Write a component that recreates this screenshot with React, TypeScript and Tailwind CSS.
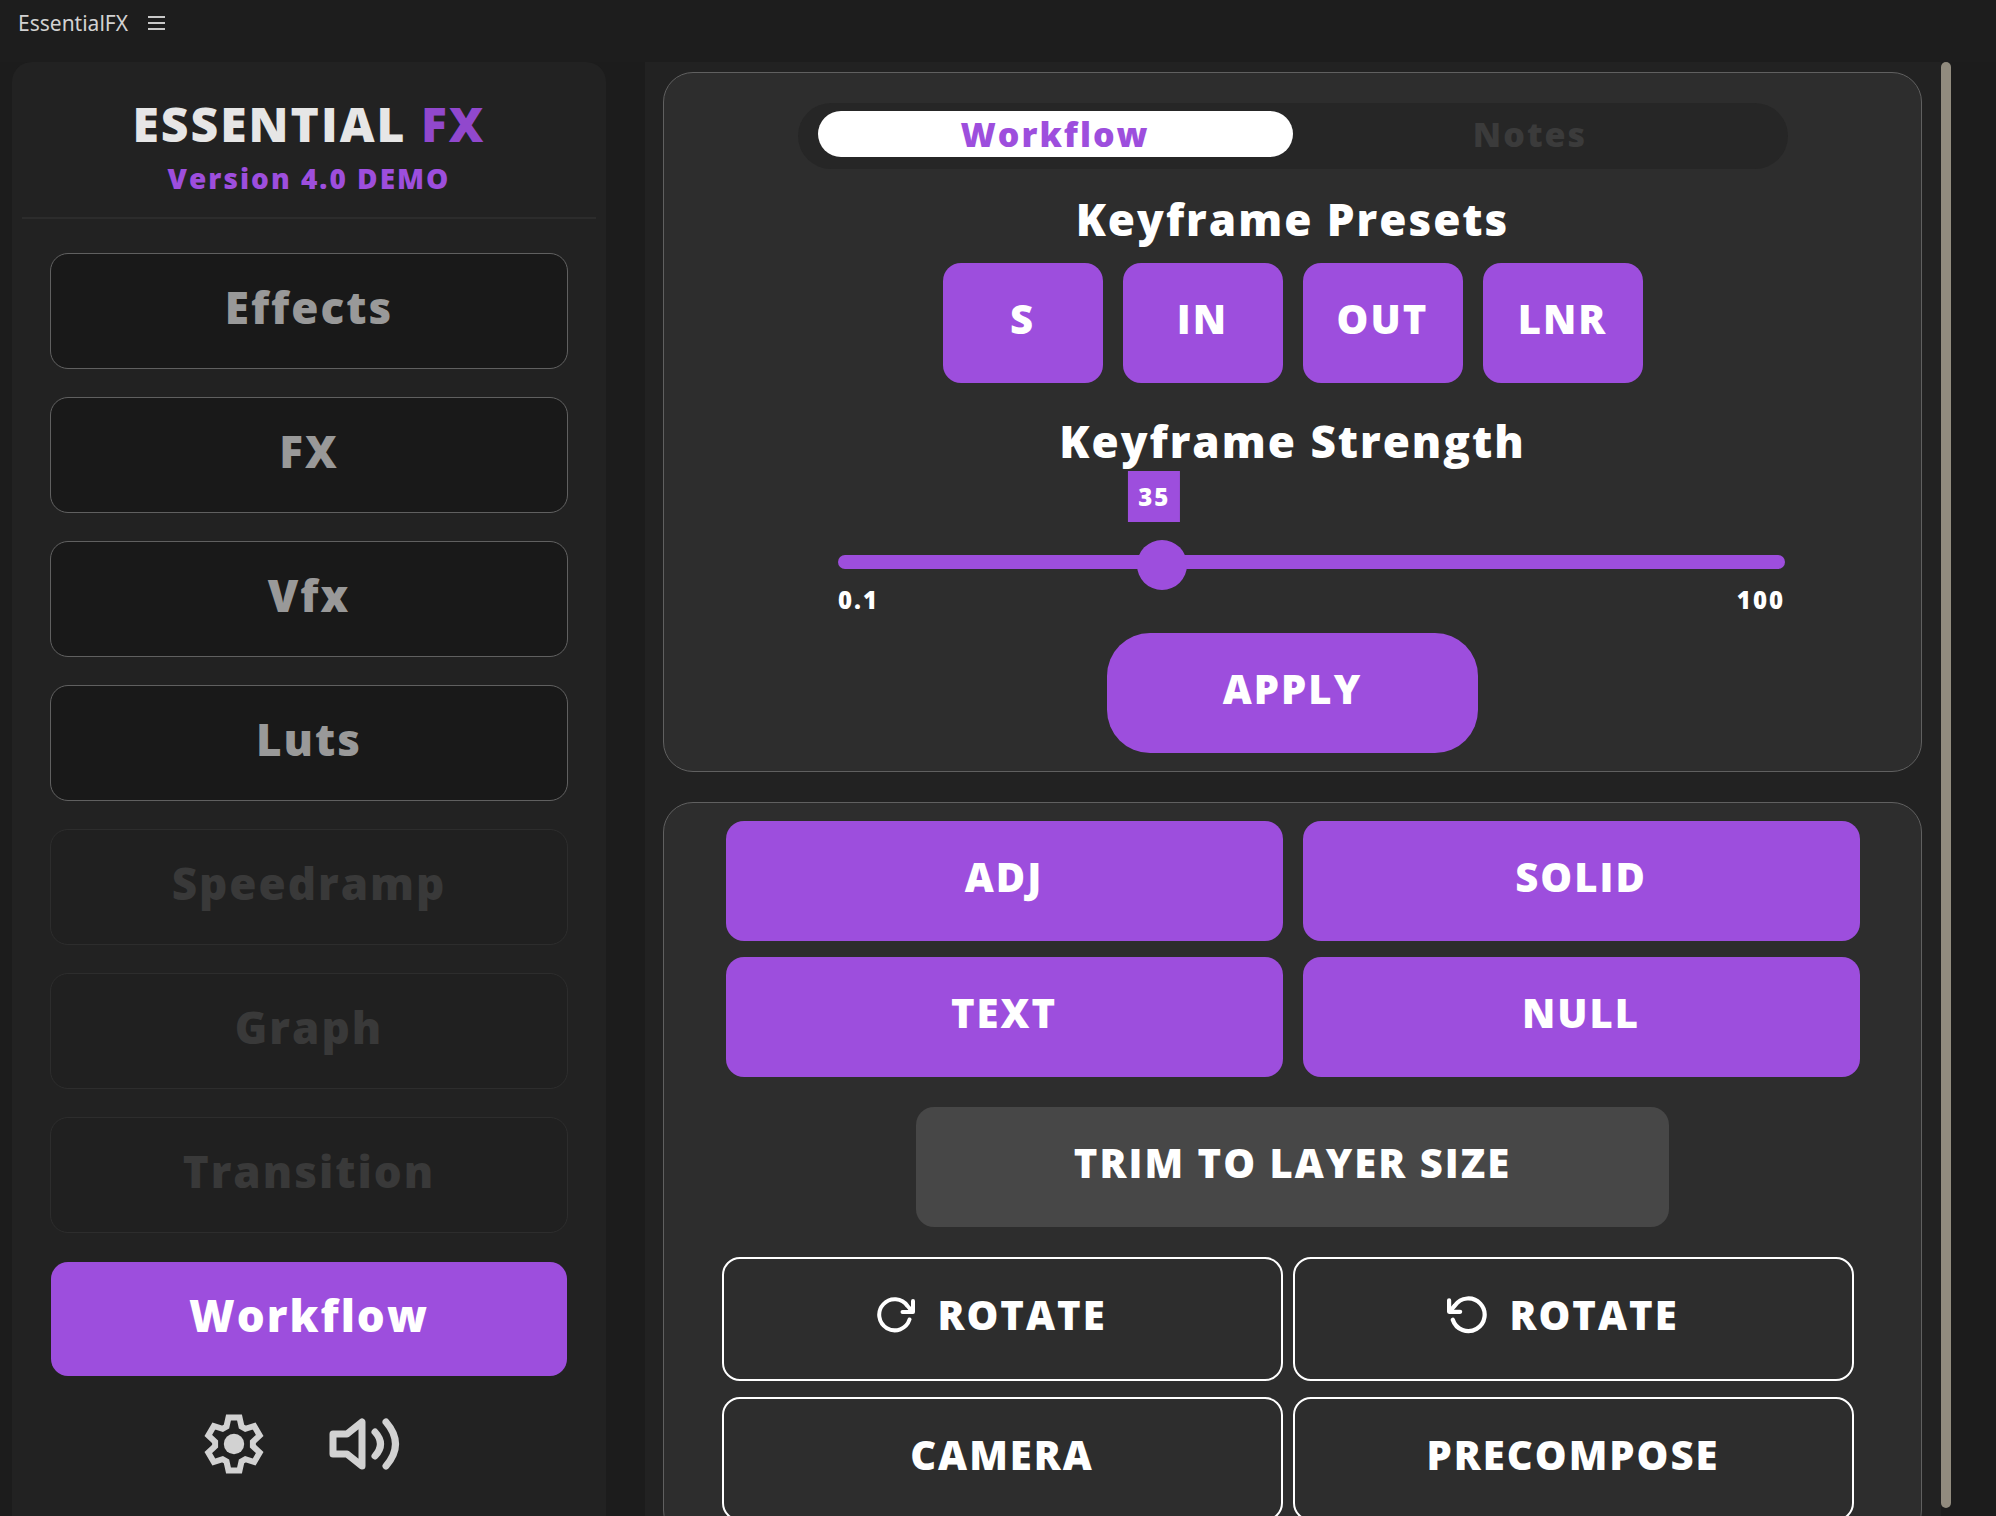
import { useState } from 'react';

interface MenuItem {
  label: string;
  locked?: boolean;
}

const menu: MenuItem[] = [
  { label: 'Effects' },
  { label: 'FX' },
  { label: 'Vfx' },
  { label: 'Luts' },
  { label: 'Speedramp', locked: true },
  { label: 'Graph', locked: true },
  { label: 'Transition', locked: true },
  { label: 'Workflow' },
];

const presets = ['S', 'IN', 'OUT', 'LNR'];
const layers = ['ADJ', 'SOLID', 'TEXT', 'NULL'];

function GearIcon() {
  return (
    <svg viewBox="-30 -30 60 60" className="h-[60px] w-[60px]" fill="none">
      <path
        d="M-5.5 -26.5 5.5 -26.5 7.5 -17.5 11.4 -15.2 20.2 -18 25.7 -8.5 18.9 -2.2 18.9 2.2 25.7 8.5 20.2 18 11.4 15.2 7.5 17.5 5.5 26.5 -5.5 26.5 -7.5 17.5 -11.4 15.2 -20.2 18 -25.7 8.5 -18.9 2.2 -18.9 -2.2 -25.7 -8.5 -20.2 -18 -11.4 -15.2 -7.5 -17.5Z"
        stroke="currentColor"
        strokeWidth="6"
      />
      <circle r="10.2" fill="currentColor" />
    </svg>
  );
}

function SoundIcon() {
  return (
    <svg
      viewBox="0 0 72 54"
      className="h-[54px] w-[72px]"
      fill="none"
      stroke="currentColor"
      strokeWidth="7"
      strokeLinecap="round"
      strokeLinejoin="round"
    >
      <path d="M5 17H19L34 5V49L19 37H5Z" />
      <path d="M47 15Q58 27 47 39" />
      <path d="M58 5Q77 27 58 49" />
    </svg>
  );
}

function RotateIcon({ flip }: { flip?: boolean }) {
  return (
    <svg
      viewBox="0 0 38 38"
      className={flip ? 'h-10 w-10 -scale-x-100' : 'h-[38px] w-[38px]'}
      fill="none"
      stroke="currentColor"
      strokeWidth="4"
      strokeLinecap="round"
      strokeLinejoin="round"
    >
      <path d="M32.5 23.5A15.5 15.5 0 1 1 30.5 10L35 15" />
      <path d="M36 5V16H25.5" />
      <path d="M36 10V16H30Z" fill="currentColor" strokeWidth="1" />
    </svg>
  );
}

export default function App() {
  const [page, setPage] = useState('Workflow');
  const [tab, setTab] = useState('Workflow');
  const [strength, setStrength] = useState(33.4);

  const solid =
    'h-[120px] rounded-[18px] bg-[#9d4edd] pb-2 text-[40px] hover:bg-[#a95fe3]';
  const outline =
    'flex h-[124px] items-center justify-center rounded-[18px] border-2 border-white pb-2 text-[40px]';

  return (
    <div className="flex h-screen flex-col overflow-hidden bg-[#1c1c1c] font-['Open_Sans',sans-serif] font-extrabold tracking-[2px] text-white">
      <header className="flex h-[62px] shrink-0 items-start gap-5 bg-[#1d1d1d] px-[18px] pt-2 font-['Noto_Sans',sans-serif] font-normal tracking-normal text-[#d2d2d2]">
        <span className="text-[21px] leading-[30px]">EssentialFX</span>
        <button aria-label="Panel menu" className="flex h-[30px] flex-col justify-center gap-[4px]">
          <span className="h-[2px] w-[17px] bg-[#c8c8c8]" />
          <span className="h-[2px] w-[17px] bg-[#c8c8c8]" />
          <span className="h-[2px] w-[17px] bg-[#c8c8c8]" />
        </button>
      </header>

      <div className="flex min-h-0 flex-1 pr-[45px] pl-3">
        <aside className="w-[594px] shrink-0 rounded-t-[20px] bg-[#222222] px-[10px]">
          <div className="border-b-2 border-[#2c2c2c] pt-8 pb-[19px] text-center">
            <h1 className="text-[48px] leading-[60px] text-[#e6e6e6]">
              ESSENTIAL <span className="text-[#9148cd]">FX</span>
            </h1>
            <p className="mt-1 text-[28px] leading-[40px] text-[#9d4edd]">Version 4.0 DEMO</p>
          </div>

          <nav className="flex flex-col gap-7 px-7 pt-[34px]">
            {menu.map(({ label, locked }) => (
              <button
                key={label}
                disabled={locked}
                onClick={() => setPage(label)}
                className={`h-[116px] rounded-[18px] border bg-clip-padding pb-2 text-[44px] ${
                  locked
                    ? 'border-[#2d2d2d] bg-[#202020] text-[#393939]'
                    : page === label
                      ? 'border-transparent bg-[#9d4edd] text-white'
                      : 'border-[#606060] bg-[#191919] text-[#999999]'
                }`}
              >
                {label}
              </button>
            ))}
          </nav>

          <div className="flex items-center justify-center gap-16 pt-[37px] pr-[14px] text-[#d2d2d2]">
            <button aria-label="Settings">
              <GearIcon />
            </button>
            <button aria-label="Sound">
              <SoundIcon />
            </button>
          </div>
        </aside>

        <main className="ml-[39px] flex min-w-0 flex-1">
          <div className="flex min-w-0 flex-1 flex-col gap-[30px] overflow-hidden bg-[#222222] pt-[10px] pr-[19px] pl-[18px]">
            <section className="flex shrink-0 flex-col items-center rounded-[30px] border border-[#606060] bg-[#2d2d2d] pt-[30px] pb-[18px]">
              <div className="grid w-[990px] grid-cols-2 rounded-full bg-[#262626] px-5 pt-2 pb-3 text-[34px] leading-[46px]">
                {['Workflow', 'Notes'].map((name) => (
                  <button
                    key={name}
                    onClick={() => setTab(name)}
                    className={`rounded-full ${
                      tab === name ? 'bg-white text-[#9d4edd]' : 'text-[#3b3b3b]'
                    }`}
                  >
                    {name}
                  </button>
                ))}
              </div>

              <h2 className="mt-6 text-[44px] leading-[52px]">Keyframe Presets</h2>
              <div className="mt-[18px] flex gap-5">
                {presets.map((name) => (
                  <button key={name} className={`w-40 ${solid}`}>
                    {name}
                  </button>
                ))}
              </div>

              <h2 className="mt-8 text-[44px] leading-[52px]">
                <label htmlFor="strength">Keyframe Strength</label>
              </h2>
              <div className="w-[985px] pl-[38px] text-[24px]">
                <div className="relative pt-[88px]">
                  <output
                    htmlFor="strength"
                    className="absolute top-1 -translate-x-1/2 bg-[#9d4edd] px-[10px] leading-[51px]"
                    style={{ left: `${strength}%` }}
                  >
                    {Math.round(strength / 5) * 5}
                  </output>
                  <input
                    id="strength"
                    type="range"
                    min={0.1}
                    max={100}
                    step={0.1}
                    value={strength}
                    onChange={(e) => setStrength(Number(e.target.value))}
                    className="block h-[14px] w-full cursor-pointer appearance-none rounded-full bg-[#9d4edd] [&::-webkit-slider-thumb]:mt-[6px] [&::-webkit-slider-thumb]:size-[50px] [&::-webkit-slider-thumb]:appearance-none [&::-webkit-slider-thumb]:rounded-full [&::-webkit-slider-thumb]:bg-[#9d4edd]"
                  />
                </div>
                <div className="flex justify-between pt-4 leading-[30px]">
                  <span>0.1</span>
                  <span>100</span>
                </div>
              </div>
              <button className="mt-[18px] h-[120px] w-[371px] rounded-[43px] bg-[#9d4edd] pb-2 text-[40px] hover:bg-[#a95fe3]">
                APPLY
              </button>
            </section>

            <section className="flex shrink-0 flex-col items-center rounded-[30px] border border-[#606060] bg-[#2d2d2d] py-[18px]">
              <div className="grid w-[1134px] grid-cols-2 gap-x-5 gap-y-4">
                {layers.map((name) => (
                  <button key={name} className={solid}>
                    {name}
                  </button>
                ))}
              </div>

              <button className="my-[30px] h-[120px] w-[753px] rounded-[18px] bg-[#474747] pb-2 text-[40px]">
                TRIM TO LAYER SIZE
              </button>

              <div className="grid w-[1142px] grid-cols-2 gap-x-[10px] gap-y-4 pr-[10px]">
                <button className={`gap-[22px] pr-5 ${outline}`}>
                  <RotateIcon />
                  ROTATE
                </button>
                <button className={`gap-[22px] pr-5 ${outline}`}>
                  <RotateIcon flip />
                  ROTATE
                </button>
                <button className={outline}>CAMERA</button>
                <button className={outline}>PRECOMPOSE</button>
              </div>
            </section>
          </div>
          <div className="mb-2 w-[10px] shrink-0 rounded-full bg-[#918b7e]" />
        </main>
      </div>
    </div>
  );
}
